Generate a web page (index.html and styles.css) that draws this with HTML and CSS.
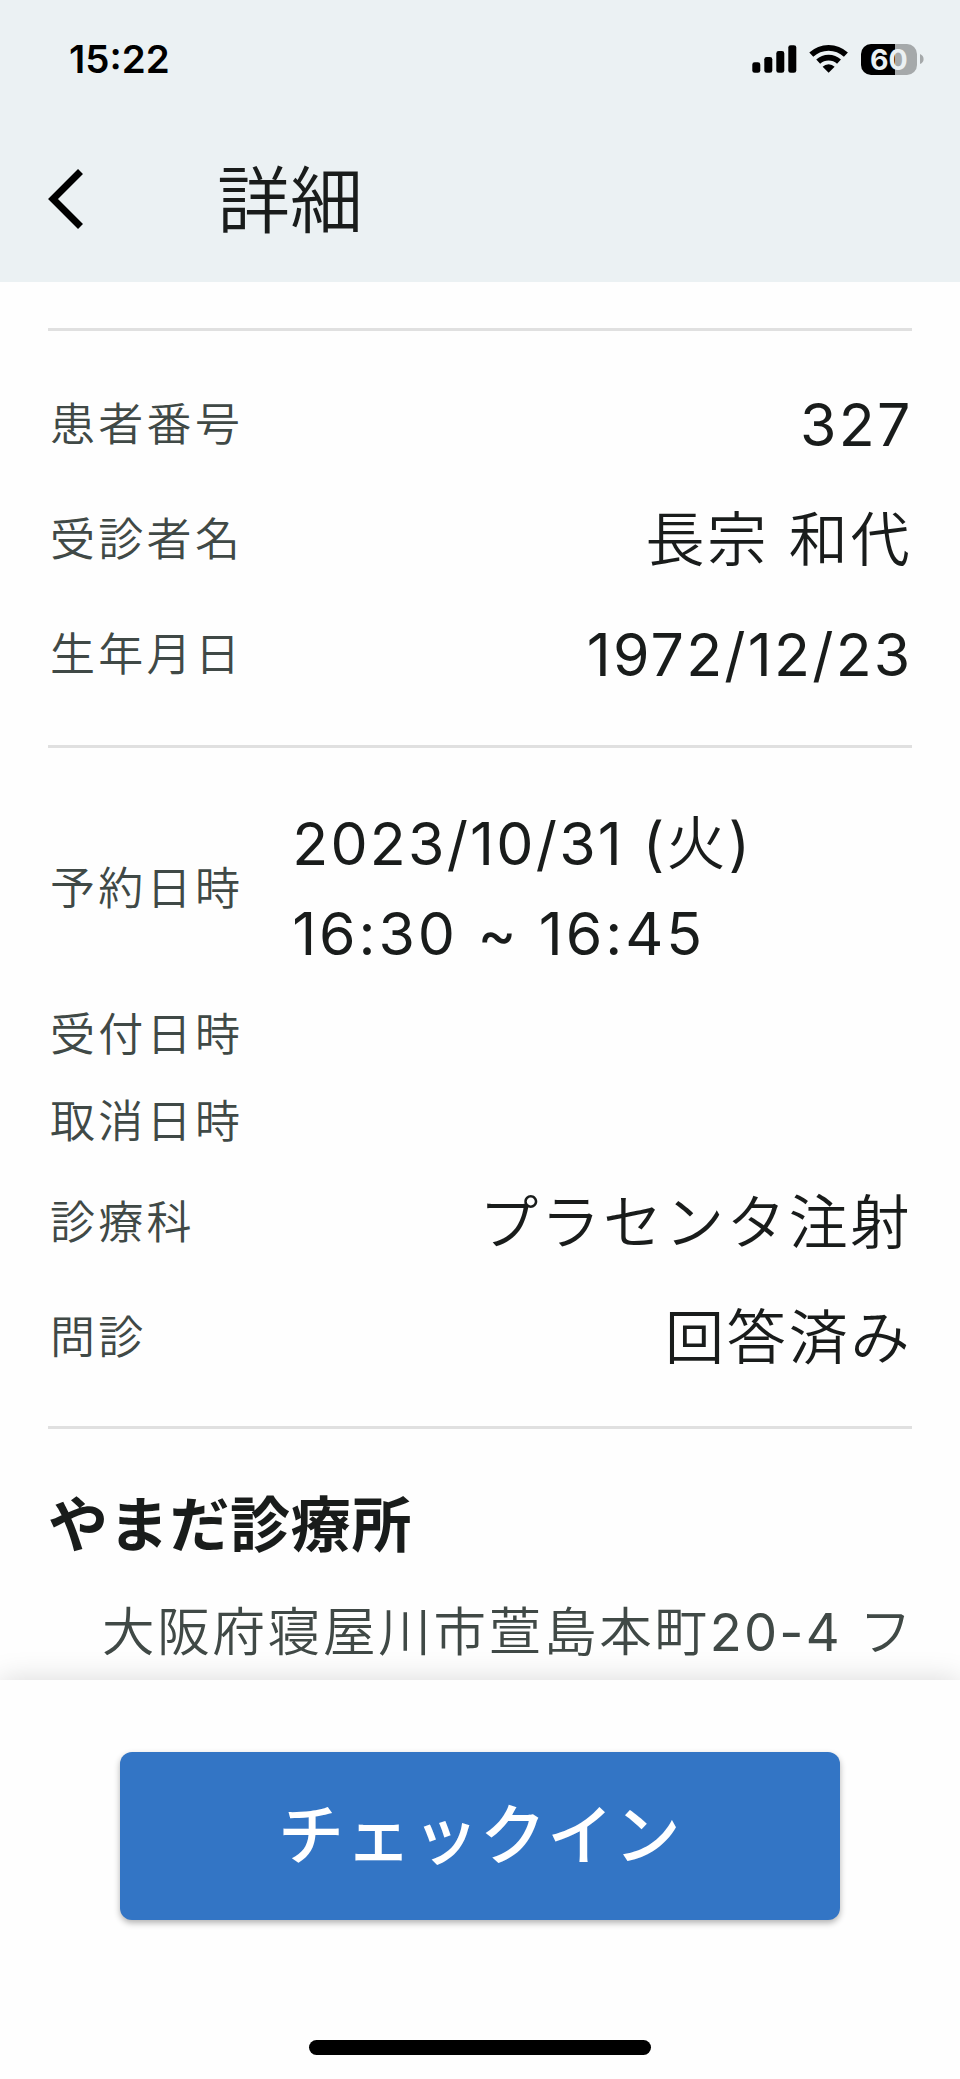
FILE: index.html
```html
<!DOCTYPE html>
<html lang="ja">
<head>
<meta charset="utf-8">
<title>詳細</title>
<link rel="stylesheet" href="styles.css">
</head>
<body>
<div class="screen">
  <header class="header">
    <div class="status">
      <span class="time">15:22</span>
      <div class="status-icons">
        <svg class="signal" width="96" height="32" viewBox="0 0 96 32">
          <rect x="0.3" y="19.3" width="8" height="10.5" rx="2.4"/>
          <rect x="12.3" y="13.9" width="8" height="15.9" rx="2.4"/>
          <rect x="24.3" y="8" width="8" height="21.8" rx="2.4"/>
          <rect x="36.3" y="2.2" width="8" height="27.6" rx="2.4"/>
          <g fill="none" stroke="#000" stroke-width="5.8">
            <path d="M59.300 11.700a25.2 25.2 0 0 1 34.600 0"/>
            <path d="M66.200 18.700a15.5 15.5 0 0 1 20.800 0"/>
          </g>
          <path d="M76.6 29.8l-6-6a8.4 8.4 0 0 1 12 0z"/>
        </svg>
        <div class="battery"><span class="battery-level">60</span></div>
        <svg class="nub" width="4" height="10" viewBox="0 0 4 10"><path fill="#a5a9aa" d="M0 0q3.600 1.500 3.600 5t-3.600 5z"/></svg>
      </div>
    </div>
    <div class="appbar">
      <svg class="back" width="36" height="60" viewBox="0 0 36 60"><path d="M32.500 2.500L5 30l27.500 27.500" fill="none" stroke="#000" stroke-width="7"/></svg>
      <h1 class="title">詳細</h1>
    </div>
  </header>
  <main class="content">
    <section class="group patient">
      <div class="row"><span class="label">患者番号</span><span class="value num">327</span></div>
      <div class="row"><span class="label">受診者名</span><span class="value">長宗 和代</span></div>
      <div class="row"><span class="label">生年月日</span><span class="value num">1972/12/23</span></div>
    </section>
    <section class="group booking">
      <div class="row period"><span class="label">予約日時</span><span class="value"><span class="num">2023/10/31 (</span>火<span class="num">)</span><br><span class="num hours">16:30 ~ 16:45</span></span></div>
      <div class="row short"><span class="label">受付日時</span></div>
      <div class="row short"><span class="label">取消日時</span></div>
      <div class="row"><span class="label">診療科</span><span class="value">プラセンタ注射</span></div>
      <div class="row"><span class="label">問診</span><span class="value">回答済み</span></div>
    </section>
    <section class="group clinic">
      <h2 class="clinic-name">やまだ診療所</h2>
      <p class="address">大阪府寝屋川市萱島本町<span class="num">20-4</span> フ</p>
    </section>
  </main>
  <footer class="footer">
    <button class="checkin">チェックイン</button>
    <div class="home"></div>
  </footer>
</div>
</body>
</html>
```
FILE: styles.css
```css
* { box-sizing: border-box; }
body { margin: 0; background: #fefefe; font-family: Inter, "Noto Sans CJK JP", sans-serif; color: #191c1b; }
h1, h2, p { margin: 0; font-weight: 350; }
.screen { width: 960px; height: 2079px; display: flex; flex-direction: column; overflow: hidden; }
.header { height: 282px; flex: none; background: #ebf1f3; }
.status { height: 116px; padding: 2px 36px 0 69px; display: flex; justify-content: space-between; align-items: center; }
.time { font-size: 38.5px; font-weight: 600; color: #000; }
.status-icons { display: flex; align-items: center; gap: 3px; }
.signal { display: block; margin-right: 10px; }
.battery { width: 56.5px; height: 31px; border-radius: 10px; background: linear-gradient(90deg, #000 60%, #a5a9aa 60%); display: flex; align-items: center; justify-content: center; }
.battery-level { font-size: 28.5px; line-height: 31px; font-weight: 650; color: #ebf1f3; }
.appbar { height: 166px; padding: 0 48px; display: flex; align-items: center; }
.back { margin: 0 133px 0 0; }
.title { font-size: 73px; line-height: 100px; padding-top: 3px; }
.content { flex: 1; min-height: 0; padding: 46px 48px 0; }
.group { border-top: 3px solid #e0e0e0; }
.patient { height: 417px; padding-top: 36px; }
.booking { height: 681px; padding-top: 50px; }
.clinic { padding-top: 51px; }
.row { height: 115px; padding: 0 0 0 2px; display: flex; justify-content: space-between; align-items: center; }
.row.short { height: 87px; }
.row.period { height: 181px; margin-bottom: 12px; justify-content: flex-start; gap: 49px; }
.label { font-size: 45px; line-height: 60px; letter-spacing: 3.3px; font-weight: 350; color: #404946; }
.value { font-size: 59px; line-height: 90px; letter-spacing: 2.9px; margin-right: -0.5px; font-weight: 350; }
.num { font-weight: 400; letter-spacing: 2.2px; }
.hours { letter-spacing: 2.9px; }
.clinic-name { font-size: 60px; line-height: 90px; letter-spacing: 0.7px; font-weight: 700; }
.address { padding-left: 54px; font-size: 52.5px; line-height: 80px; letter-spacing: 2.75px; color: #404946; white-space: nowrap; margin-top: 22px; }
.footer { height: 399px; flex: none; padding-top: 72px; background: #fefefe; box-shadow: 0 0 28px rgba(0,0,0,.15); display: flex; flex-direction: column; align-items: center; z-index: 1; }
.checkin { width: 720px; height: 168px; flex: none; border: 0; border-radius: 12px; padding: 0 0 12px; background: #3375c5; color: #fff; font-family: "Noto Sans CJK JP", sans-serif; font-size: 66px; font-weight: 500; letter-spacing: 1.3px; box-shadow: 0 3px 6px rgba(0,0,0,.3); }
.home { width: 342px; height: 15px; margin-top: 120px; border-radius: 8px; background: #000; }
```
